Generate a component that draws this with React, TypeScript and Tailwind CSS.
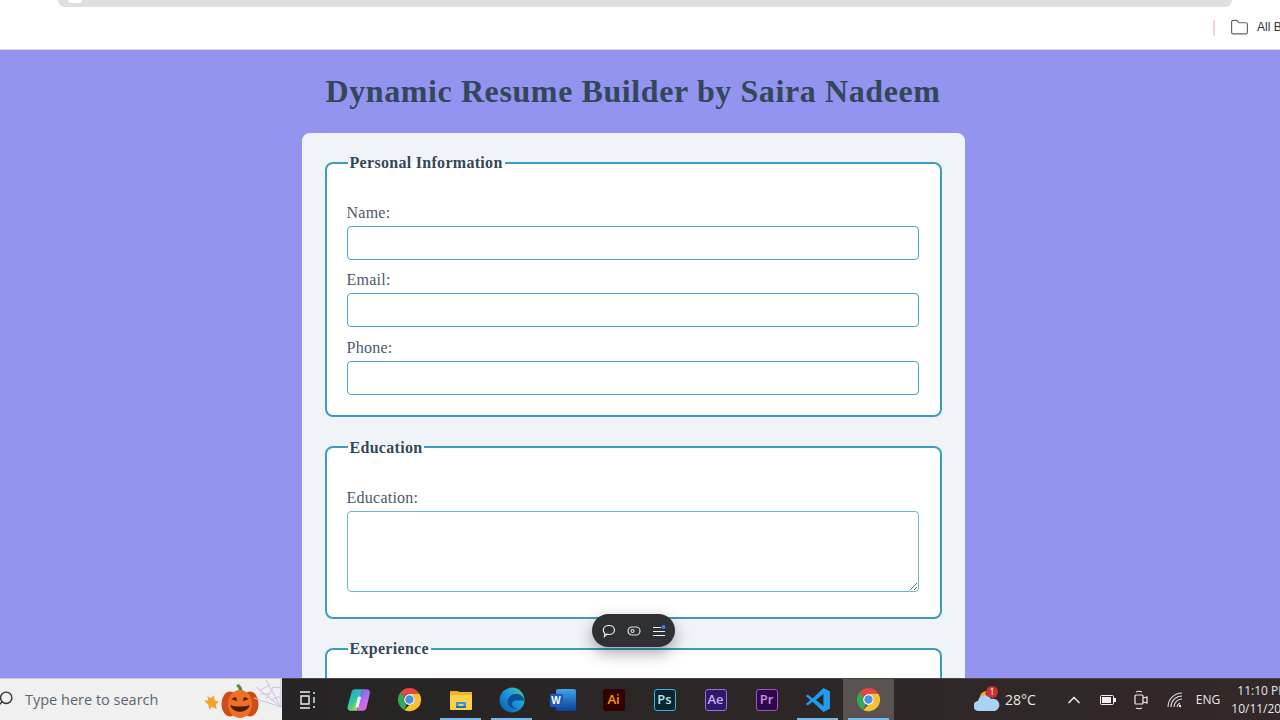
import { ChevronUp, Folder, Search } from 'lucide-react'

const fieldClass =
  'block w-full border border-[#4aa5c6] rounded-[4px] bg-white outline-none'

function Field({ label, area }: { label: string; area?: boolean }) {
  return (
    <div className="mb-[10.300px]">
      <label className="block text-[16px] leading-[19px] tracking-[0.25px] text-[#4a5a68] mb-[4px]">{label}</label>
      {area ? (
        <textarea className={`${fieldClass} h-[81px] resize-y border-[#6cb6d0]`} />
      ) : (
        <input type="text" className={`${fieldClass} h-[34px]`} />
      )}
    </div>
  )
}

function Section({ title, className, children }: { title: string; className?: string; children?: React.ReactNode }) {
  return (
    <fieldset className={`border-2 border-[#3b9cbf] rounded-[8px] bg-white pl-[20px] pr-[21px] ${className ?? ''}`}>
      <legend className="ml-[1px] px-[2px] text-[16px] leading-[19px] tracking-[0.3px] font-bold text-[#33475b]">{title}</legend>
      {children}
    </fieldset>
  )
}

function Chrome() {
  return (
    <svg width="25" height="25" viewBox="0 0 24 24">
      <path d="M12 1a11 11 0 0 1 9.500 5.500H12a5.500 5.500 0 0 0-5 3.200L3.400 5.100A11 11 0 0 1 12 1z" fill="#e8453c" />
      <path d="M3.400 5.100 7 9.700a5.500 5.500 0 0 0 2.300 7L7 22a11 11 0 0 1-3.600-16.900z" fill="#34a853" />
      <path d="M21.500 6.500A11 11 0 0 1 7 22l4.500-4.600a5.500 5.500 0 0 0 4.900-8.200L12 6.500z" fill="#fbc02d" />
      <circle cx="12" cy="12" r="5.200" fill="#fff" />
      <circle cx="12" cy="12" r="4" fill="#4a90e2" />
    </svg>
  )
}

function Copilot() {
  return (
    <svg width="26" height="26" viewBox="0 0 24 24">
      <defs>
        <linearGradient id="cpa" x1="0" y1="0" x2="0.600" y2="1">
          <stop offset="0" stopColor="#1f9fe8" />
          <stop offset="0.6" stopColor="#2fc7a0" />
          <stop offset="1" stopColor="#b5d93c" />
        </linearGradient>
        <linearGradient id="cpb" x1="0.400" y1="0" x2="1" y2="1">
          <stop offset="0" stopColor="#7a6cf0" />
          <stop offset="0.6" stopColor="#c86be8" />
          <stop offset="1" stopColor="#f0679e" />
        </linearGradient>
      </defs>
      <path d="M8 2h7l-5 20H5c-3 0-4-2-3.500-4L5 5c.4-2 1.500-3 3-3z" fill="url(#cpa)" />
      <path d="M15 2h4c2.500 0 3.500 2 3 4l-3 13c-.5 2-1.800 3-3.500 3H10z" fill="url(#cpb)" />
      <path d="M11 9l-2.500 10h3L14 9z" fill="#fff" opacity="0.85" />
    </svg>
  )
}

function Explorer() {
  return (
    <svg width="24" height="22" viewBox="0 0 24 22">
      <path d="M1 2h8l2 2h-10z" fill="#e3a81f" />
      <rect x="1" y="3" width="22" height="18" rx="1" fill="#fbd14b" />
      <rect x="1" y="3" width="22" height="3" fill="#eeb52c" />
      <path d="M7 17v-4h10v4h-2.500v-2h-5v2z" fill="#3a96dd" />
      <rect x="7" y="17" width="10" height="2" fill="#2174b8" />
    </svg>
  )
}

function Edge() {
  return (
    <svg width="26" height="26" viewBox="0 0 24 24">
      <defs>
        <linearGradient id="edg" x1="0" y1="1" x2="1" y2="0">
          <stop offset="0" stopColor="#0c59a4" />
          <stop offset="0.6" stopColor="#1b9de2" />
          <stop offset="1" stopColor="#52d17c" />
        </linearGradient>
      </defs>
      <circle cx="12" cy="12" r="11.500" fill="url(#edg)" />
      <path d="M23.500 13c-.5-4-4-6.500-7.500-6.500-4.500 0-8 3-8 7 0 5 5 8 9.500 6.500-3 .5-5.500-2-5.500-4.500 0-2 2-3 4-3h7.300z" fill="#0e4f94" />
    </svg>
  )
}

function Word() {
  return (
    <div className="relative w-[26px] h-[22px]">
      <div className="absolute right-0 top-0 w-[20px] h-[22px] rounded-[2px] bg-gradient-to-b from-[#41a5ee] to-[#103f91]" />
      <div className="absolute left-0 top-[5px] w-[13px] h-[13px] rounded-[1px] bg-[#185abd] text-white text-[10px] leading-[13px] font-bold text-center font-['Liberation_Sans',sans-serif]">
        W
      </div>
    </div>
  )
}

function Adobe({ label, className }: { label: string; className: string }) {
  return (
    <div className={`w-[22px] h-[22px] border-[1.500px] rounded-[3px] text-[13px] leading-[19px] font-semibold text-center font-['Open_Sans',sans-serif] ${className}`}>
      {label}
    </div>
  )
}

function VSCode() {
  return (
    <svg width="26" height="26" viewBox="0 0 24 24">
      <path d="M17 1l6 3v16l-6 3-10-9.500L2.500 17 .8 15.800 5 12 .8 8.200 2.500 7 7 10.500z" fill="#1f9cf0" />
      <path d="M17 6.500 10 12l7 5.500z" fill="#2b2626" />
    </svg>
  )
}

function Pumpkin() {
  return (
    <svg width="38" height="36" viewBox="0 0 38 36">
      <path d="M18 9c0-3-1-5-3-6l2-2c3 1 4 4 5 8z" fill="#5d8a3a" />
      <ellipse cx="9" cy="21" rx="8.500" ry="12.500" fill="#cf4c16" />
      <ellipse cx="29" cy="21" rx="8.500" ry="12.500" fill="#cf4c16" />
      <ellipse cx="19" cy="21" rx="12" ry="14" fill="#ee6f27" />
      <path d="M10 16l5-2 1 4zM28 16l-5-2-1 4z" fill="#4a1c08" />
      <path d="M9 22c3 9 17 9 20 0-5 2-15 2-20 0z" fill="#4a1c08" />
    </svg>
  )
}

function Leaf() {
  return (
    <svg width="17" height="17" viewBox="0 0 16 16">
      <path d="M1 6l4 0-1-4 4 2 2-3 1 5 4 1-3 3 1 4-5-2-2 3-1-5z" fill="#f2a32b" />
    </svg>
  )
}

function Web() {
  return (
    <svg width="30" height="30" viewBox="0 0 30 30" fill="none" stroke="#cdbfe6" strokeWidth="1">
      <path d="M28 28L3 8M28 28L13 1M28 28V0M28 28L1 19" />
      <path d="M7 11Q12 9 16 6M13 20Q17 15 20 8Q24 8 28 9M7 15Q12 15 17 15M19 22Q20 18 28 18" />
    </svg>
  )
}

function Cloud() {
  return (
    <div className="relative w-[26px] h-[24px]">
      <svg width="26" height="24" viewBox="0 0 26 24" className="absolute left-0 top-0">
        <path d="M6 12a7 7 0 0 1 6-9 6 6 0 0 0 4 8z" fill="#f4a62a" />
        <path d="M5 23a5 5 0 0 1-1-10 7 7 0 0 1 13-2 6 6 0 0 1 4 12z" fill="#a9d3f5" />
      </svg>
      <div className="absolute left-[12px] -top-[2px] w-[12px] h-[12px] rounded-full bg-[#d32f2f] text-white text-[9px] leading-[12px] text-center">
        1
      </div>
    </div>
  )
}

function TaskIcon({ children, open, active }: { children: React.ReactNode; open?: boolean; active?: boolean }) {
  return (
    <div className={`relative w-[51px] h-full flex items-center justify-center shrink-0 ${active ? 'bg-[#5a5250]' : ''}`}>
      {children}
      {open && <div className="absolute left-[5px] right-[5px] bottom-0 h-[2px] bg-[#76b9ed]" />}
    </div>
  )
}

function Taskbar() {
  return (
    <div className="h-[42px] shrink-0 flex font-['Open_Sans','Noto_Sans',sans-serif] relative z-10">
      <div className="w-[282px] shrink-0 flex items-center bg-[#f0f0f0] border-t border-[#cfcfcf] overflow-hidden relative">
        <Search size={17} className="absolute -left-[3px] top-[11px] text-[#333] -scale-x-100" />
        <span className="ml-[25px] text-[14.500px] text-[#5a6672] whitespace-nowrap">Type here to search</span>
        <div className="absolute left-[203px] top-[15px]"><Leaf /></div>
        <div className="absolute left-[221px] top-[4px]"><Pumpkin /></div>
        <div className="absolute left-[253px] top-0"><Web /></div>
      </div>
      <div className="flex-1 min-w-0 flex h-full bg-gradient-to-r from-[#262424] to-[#33282a] border-t border-[#4a4545]">
        <TaskIcon>
          <svg width="18" height="18" viewBox="0 0 18 18" fill="none" stroke="#eee" strokeWidth="1.400">
            <path d="M1 1h10M1 17h10M2 5h8v8H2zM15 1v2M15 6v6M15 15v2" />
          </svg>
        </TaskIcon>
        <TaskIcon><Copilot /></TaskIcon>
        <TaskIcon><Chrome /></TaskIcon>
        <TaskIcon open><Explorer /></TaskIcon>
        <TaskIcon open><Edge /></TaskIcon>
        <TaskIcon><Word /></TaskIcon>
        <TaskIcon><Adobe label="Ai" className="bg-[#330000] border-[#330000] text-[#ff9a00]" /></TaskIcon>
        <TaskIcon><Adobe label="Ps" className="bg-[#0b2530] border-[#2fb4e0] text-[#b8e6f5]" /></TaskIcon>
        <TaskIcon><Adobe label="Ae" className="bg-[#2d1b69] border-[#9a6fd8] text-[#c9b0f5]" /></TaskIcon>
        <TaskIcon><Adobe label="Pr" className="bg-[#2a0a4a] border-[#a64fc0] text-[#d68ae8]" /></TaskIcon>
        <TaskIcon open><VSCode /></TaskIcon>
        <TaskIcon open active><Chrome /></TaskIcon>
        <div className="flex-1 min-w-0 flex items-center text-white">
          <div className="ml-[80px] shrink-0"><Cloud /></div>
          <span className="ml-[5px] shrink-0 text-[14px] text-[#e8e8e8]">28°C</span>
          <ChevronUp size={20} className="ml-[28px] shrink-0 text-[#e8e8e8]" />
          <svg width="16" height="10" viewBox="0 0 16 10" className="ml-[16px] shrink-0" fill="none">
            <rect x="0.500" y="0.500" width="13" height="9" rx="1" stroke="#eee" />
            <rect x="2" y="2" width="9" height="6" fill="#eee" />
            <rect x="14" y="3" width="2" height="4" fill="#eee" />
          </svg>
          <svg width="14" height="20" viewBox="0 0 14 20" fill="none" stroke="#eee" strokeWidth="1.200" className="ml-[18px] shrink-0">
            <rect x="1" y="5" width="8" height="9" rx="1" />
            <path d="M9 8l4-1v6l-4-1M2 2q3-1.500 6 0M2 18q3 1.500 6 0" />
          </svg>
          <svg width="16" height="16" viewBox="0 0 16 16" fill="none" stroke="#ddd" strokeWidth="1.100" className="ml-[19px] shrink-0">
            <path d="M1 15A14 14 0 0 1 15 1M4 15A11 11 0 0 1 15 4M7 15a8 8 0 0 1 8-8M10 15a5 5 0 0 1 3-4" />
            <circle cx="13" cy="14" r="1.200" fill="#eee" stroke="none" />
          </svg>
          <span className="ml-[13px] shrink-0 text-[12px] text-[#e8e8e8]">ENG</span>
          <div className="ml-[11px] shrink-0 text-[12px] leading-[18px] text-[#e8e8e8] whitespace-nowrap">
            <div className="ml-[6px]">11:10 PM</div>
            <div>10/11/2024</div>
          </div>
        </div>
      </div>
    </div>
  )
}

export default function App() {
  return (
    <div className="relative w-[1280px] h-[720px] overflow-hidden flex flex-col bg-[#9393f0] font-['Liberation_Serif',serif]">
      {/* browser chrome, cropped */}
      <div className="h-[50px] shrink-0 bg-white border-b border-[#d8d8e0] relative flex font-['Liberation_Sans',sans-serif]">
        <div className="absolute left-[58px] w-[1174px] top-0 h-[7px] bg-[#dfdfdf] rounded-b-[8px]">
          <div className="absolute left-[10px] -top-[4px] w-[14px] h-[7px] rounded-full bg-white" />
        </div>
        <div className="ml-[1213px] mt-[20px] w-[2px] h-[16px] bg-[#f6cfe0] shrink-0" />
        <Folder size={19} strokeWidth={1.500} className="ml-[15px] mt-[18px] shrink-0 text-[#666]" />
        <span className="ml-[8px] mt-[19px] text-[12px] leading-[16px] text-[#333] whitespace-nowrap">All Bookmarks</span>
      </div>

      {/* page */}
      <div className="flex-1 min-h-0 overflow-hidden pr-[14px]">
        <h1 className="text-[32px] leading-[40px] font-bold text-[#33475b] text-center mt-[21px] mb-[22px] tracking-[0.6px]">
          Dynamic Resume Builder by Saira Nadeem
        </h1>
        <div className="w-[663px] mx-auto bg-[#f0f4f8] rounded-[8px] px-[23px] pt-[20px] pb-[20px]">
          <Section title="Personal Information" className="pt-[31px] pb-[10px] mb-[21px]">
            <Field label="Name:" />
            <Field label="Email:" />
            <Field label="Phone:" />
          </Section>
          <Section title="Education" className="pt-[31px] pb-[15px] mb-[20px]">
            <Field label="Education:" area />
          </Section>
          <Section title="Experience" className="pt-[31px] pb-[15px]">
            <Field label="Experience:" area />
          </Section>
        </div>
      </div>

      <Taskbar />

      {/* floating toolbar */}
      <div className="absolute left-[592px] top-[614px] w-[83px] h-[33px] rounded-full bg-[#2f3033] shadow-[0_6px_16px_rgba(0,0,0,0.35)] flex items-center justify-center gap-[11px] z-20">
        <svg width="14" height="14" viewBox="0 0 14 14" fill="none" stroke="#eee" strokeWidth="1.200">
          <path d="M7 1.500c3 0 5.500 1.800 5.500 4.500S10 10.500 7 10.500c-.8 0-1.500-.1-2.200-.3L2.500 12.500l.3-3C1.800 8.500 1.300 7.300 1.300 6 1.300 3.300 4 1.500 7 1.500z" />
        </svg>
        <svg width="14" height="14" viewBox="0 0 14 14" fill="none" stroke="#ddd" strokeWidth="1.200">
          <rect x="1" y="3" width="12" height="8" rx="4" />
          <circle cx="5.500" cy="7" r="1.500" />
        </svg>
        <svg width="14" height="14" viewBox="0 0 14 14" fill="none">
          <path d="M1 3.500h8M1 7.500h12M1 11.500h12" stroke="#eee" strokeWidth="1.200" />
          <circle cx="11.500" cy="3" r="2" fill="#3b82f6" />
        </svg>
      </div>
    </div>
  )
}
